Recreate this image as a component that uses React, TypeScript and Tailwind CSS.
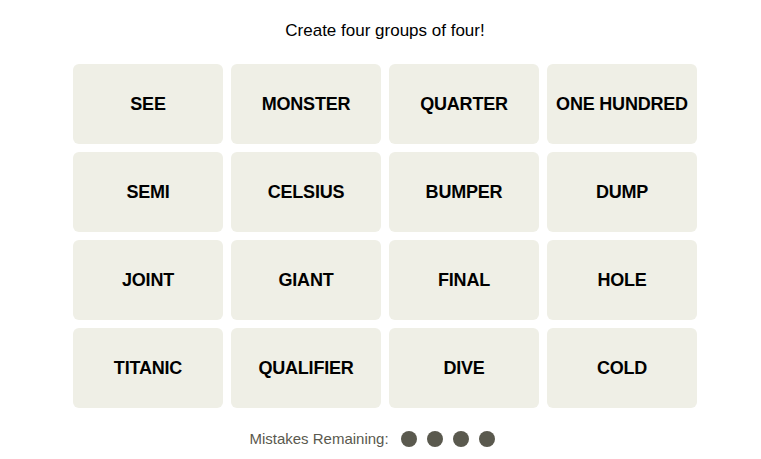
import React from "react";

const words: string[] = [
  "SEE",
  "MONSTER",
  "QUARTER",
  "ONE HUNDRED",
  "SEMI",
  "CELSIUS",
  "BUMPER",
  "DUMP",
  "JOINT",
  "GIANT",
  "FINAL",
  "HOLE",
  "TITANIC",
  "QUALIFIER",
  "DIVE",
  "COLD",
];

const App: React.FC = () => {
  return (
    <main
      className="w-[761px] h-[459px] bg-white flex flex-col items-center pl-[9px] pt-[19px]"
      style={{ fontFamily: "'Liberation Sans', Arial, sans-serif" }}
    >
      <p className="text-[17px] leading-6 text-black">Create four groups of four!</p>

      <div className="mt-[21px] grid grid-cols-4 gap-2">
        {words.map((word) => (
          <button
            key={word}
            className="w-[150px] h-[80px] rounded-md bg-[#efefe6] flex items-center justify-center text-[18px] font-bold text-black tracking-[-0.2px]"
          >
            {word}
          </button>
        ))}
      </div>

      <div className="mt-[20px] mr-[26px] flex items-center gap-3">
        <span className="text-[15px] text-[#5a594e]">Mistakes Remaining:</span>
        <div className="flex items-center gap-[10px]">
          <span className="w-4 h-4 rounded-full bg-[#5a594e]" />
          <span className="w-4 h-4 rounded-full bg-[#5a594e]" />
          <span className="w-4 h-4 rounded-full bg-[#5a594e]" />
          <span className="w-4 h-4 rounded-full bg-[#5a594e]" />
        </div>
      </div>
    </main>
  );
};

export default App;
